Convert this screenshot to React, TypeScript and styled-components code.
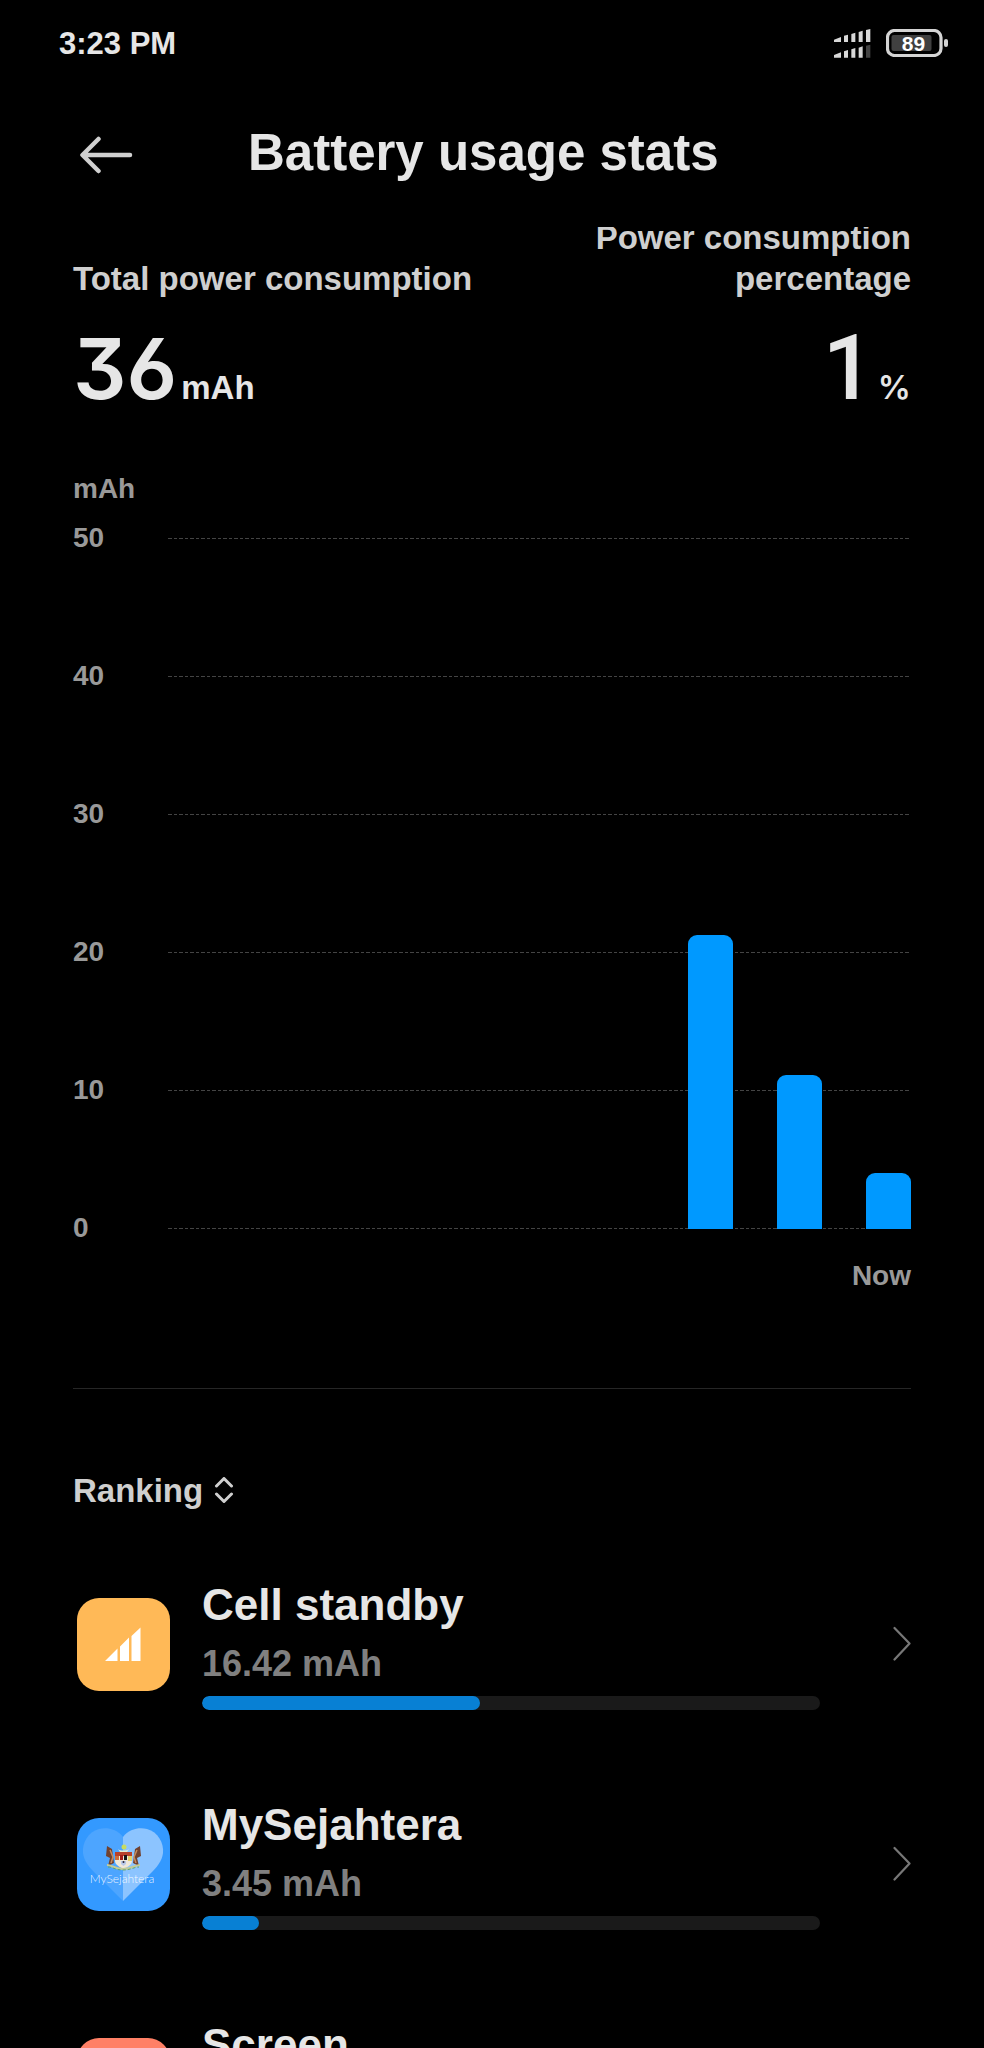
import React from "react";
import styled, { createGlobalStyle } from "styled-components";

const GlobalStyle = createGlobalStyle`
  *, *::before, *::after { box-sizing: border-box; }
  html, body { margin: 0; background: #000; }
  body { font-family: "Liberation Sans", Arial, sans-serif; font-weight: 700; color: #e6e6e6; }
  h1, h2, p, ul, dl, dd { margin: 0; padding: 0; }
  ul { list-style: none; }
  svg { display: block; flex: none; }
`;

const Screen = styled.div`
  height: 100vh;
  display: flex;
  flex-direction: column;
  overflow: hidden;
`;

const StatusBar = styled.div`
  flex: none;
  display: flex;
  align-items: center;
  justify-content: space-between;
  height: 86px;
  padding: 0 35px 0 59px;
`;

const Clock = styled.time`
  font-size: 31px;
  line-height: 36px;
  padding-top: 2px;
`;

const StatusIcons = styled.div`
  display: flex;
  align-items: center;
  gap: 15px;
`;

const TitleBar = styled.header`
  flex: none;
  display: flex;
  align-items: center;
  height: 141px;
  padding: 0 73px 4px 80px;
  gap: 114px;
`;

const BackButton = styled.button`
  padding: 0;
  border: 0;
  background: none;
  color: #d0d0d0;
  cursor: pointer;
`;

const Title = styled.h1`
  font-size: 51px;
  line-height: 60px;
  padding-bottom: 4px;
`;

const Scroller = styled.main`
  flex: 1;
  min-height: 0;
  overflow-y: auto;
  scrollbar-width: none;
`;

const Content = styled.div`
  margin-top: -10px;
  padding: 0 73px;
`;

const Summary = styled.dl`
  display: flex;
  justify-content: space-between;
  align-items: flex-end;
`;

const Stat = styled.div<{ $end?: boolean }>`
  max-width: ${(p) => (p.$end ? "330px" : "420px")};
  text-align: ${(p) => (p.$end ? "right" : "left")};
`;

const StatLabel = styled.dt`
  font-size: 33px;
  line-height: 41px;
  color: #cfcfcf;
`;

const StatValue = styled.dd<{ $end?: boolean }>`
  display: flex;
  align-items: baseline;
  justify-content: ${(p) => (p.$end ? "flex-end" : "flex-start")};
  gap: 4px;
  height: 140px;
  padding-top: 20px;
`;

const Figure = styled.span<{ $face: string; $size: number; $weight: number }>`
  font-family: ${(p) => p.$face}, sans-serif;
  font-size: ${(p) => p.$size}px;
  font-weight: ${(p) => p.$weight};
  font-feature-settings: "cv09", "cv03";
  line-height: 100px;
`;

const Unit = styled.span`
  font-size: 33px;
`;

const PercentUnit = styled(Unit)`
  font-family: Inter, sans-serif;
  font-weight: 600;
`;

const AxisText = styled.span`
  font-size: 28px;
  line-height: 28px;
  color: #999;
`;

const Chart = styled.section`
  display: flex;
  flex-direction: column;
  padding: 36px 0 98px;
`;

const Plot = styled.div`
  display: grid;
  grid-template-columns: 95px 1fr;
  margin: 21px 0 20px;
`;

const Ticks = styled.ul`
  grid-area: 1 / 1 / 2 / 3;
  display: flex;
  flex-direction: column;
  gap: 110px;
`;

const Tick = styled.li`
  display: grid;
  grid-template-columns: 95px 1fr;
  align-items: center;
  height: 28px;
`;

const GridLine = styled.span`
  height: 1px;
  background: repeating-linear-gradient(
    90deg,
    #444 0 4px,
    transparent 4px 6px,
    #444 6px 9px,
    transparent 9px 11px
  );
`;

const Bars = styled.div`
  grid-area: 1 / 2 / 2 / 3;
  align-self: end;
  display: flex;
  justify-content: flex-end;
  align-items: flex-end;
  gap: 44px;
  padding-bottom: 13px;
`;

const Bar = styled.div`
  width: 45px;
  border-radius: 9px 9px 0 0;
  background: #0099ff;
`;

const NowLabel = styled(AxisText)`
  align-self: flex-end;
`;

const Divider = styled.hr`
  height: 1px;
  margin: 0;
  border: 0;
  background: #262626;
`;

const SortButton = styled.button`
  display: flex;
  align-items: center;
  gap: 11px;
  margin: 80px 0 61px;
  padding: 0;
  border: 0;
  background: none;
  font: inherit;
  font-size: 33px;
  line-height: 44px;
  color: #cfcfcf;
  cursor: pointer;
`;

const AppLink = styled.a`
  display: flex;
  align-items: center;
  height: 140px;
  margin-bottom: 80px;
  padding-left: 4px;
  color: inherit;
  text-decoration: none;
`;

const AppDetails = styled.div`
  flex: 1;
  display: flex;
  flex-direction: column;
  gap: 4px;
  margin: 0 73px 0 32px;
`;

const AppName = styled.h2`
  font-size: 44px;
  line-height: 54px;
`;

const AppUsage = styled.p`
  font-size: 36px;
  line-height: 56px;
  color: #808080;
`;

const Track = styled.div`
  height: 14px;
  border-radius: 7px;
  background: #1a1a1a;
  overflow: hidden;
`;

const Fill = styled.div`
  height: 100%;
  border-radius: 7px;
  background: #0880d4;
`;

const SignalIcon = () => (
  <svg width="37" height="29" viewBox="0 0 111 87" fill="#d8d8d8" aria-hidden="true">
    <path d="M0 39V32L21 24V39ZM30 39V20L42 17V39ZM52 39V15L64 11V39ZM74 39V9L86 5V39ZM96 39V3L109 0V39Z" />
    <path d="M0 86V78L21 70V86ZM30 86V67L42 63V86ZM52 86V61L64 57V86ZM74 86V56L86 52V86Z" />
    <path d="M96 86V50L109 47V86Z" fill="#444" />
  </svg>
);

const BatteryIcon = () => (
  <svg width="63" height="28" viewBox="0 0 63 28" role="img" aria-label="Battery 89%">
    <rect x="1.5" y="1.5" width="53.5" height="25" rx="7" fill="none" stroke="#d4d4d4" strokeWidth="3.2" />
    <rect x="5.500" y="6" width="40" height="16" rx="2" fill="#404040" />
    <rect x="58" y="10" width="4" height="8" rx="2" fill="#d4d4d4" />
    <text x="27.500" y="21.500" textAnchor="middle" fontFamily="Liberation Sans, sans-serif" fontSize="21" fontWeight="700" fill="#fff">89</text>
  </svg>
);

const BackIcon = () => (
  <svg width="54" height="38" viewBox="0 0 54 38" fill="none" stroke="currentColor" strokeWidth="4.5" strokeLinecap="round" strokeLinejoin="round" aria-hidden="true">
    <path d="M50 19H3M18.500 3L2.500 19L18.500 35" />
  </svg>
);

const SortIcon = () => (
  <svg width="20" height="28" viewBox="0 0 20 28" fill="none" stroke="currentColor" strokeWidth="3" strokeLinecap="round" strokeLinejoin="round" aria-hidden="true">
    <path d="M2.500 9L10 1.500L17.500 9M2.500 17L10 24.500L17.500 17" />
  </svg>
);

const ChevronIcon = () => (
  <svg width="18" height="36" viewBox="0 0 18 36" fill="none" stroke="#777" strokeWidth="2.200" strokeLinecap="round" strokeLinejoin="round" aria-hidden="true">
    <path d="M1.500 2L16.500 17.500L1.500 33.500" />
  </svg>
);

const CellIcon = () => (
  <svg width="93" height="93" viewBox="0 0 93 93" aria-hidden="true">
    <rect width="93" height="93" rx="22" fill="#ffb957" />
    <path fill="#fff" d="M28 63L40.500 50.500V63ZM43 63V48.500L52 39.500V63ZM54.500 63V38L63.500 29.500V63Z" />
  </svg>
);

const HealthIcon = () => (
  <svg width="93" height="93" viewBox="0 0 93 93" aria-hidden="true">
    <rect width="93" height="93" rx="22" fill="#3399ff" />
    <path fill="#4da5ff" d="M46 19C40 11 30 9 22 11C11 14 5 25 6 35C7 43 12 49 18 55L46 83Z" />
    <path fill="#8cc4ff" d="M46 19C52 11 62 9 70 11C81 14 87 25 86 35C85 43 80 49 74 55L46 83Z" />
    <path d="M30 28L35 31L37 45L31 48L33 40L29 38Z" fill="#70412f" />
    <path d="M63 28L58 31L56 45L62 48L60 40L64 38Z" fill="#70412f" />
    <path d="M33 32L36 39L34 45M60 32L57 39L59 45" stroke="#c88a5c" strokeWidth="1.500" fill="none" />
    <path d="M41 31C43 33 50 33 52 31L50 34H43Z" fill="#e6edd0" />
    <circle cx="47" cy="29" r="2.500" fill="#c8dc60" />
    <path d="M38 34H55V43C55 47 50 49 46.500 51C43 49 38 47 38 43Z" fill="#efe8d8" />
    <path d="M38 34H55V38H38Z" fill="#b8422c" />
    <path d="M38 38H42V42H38Z" fill="#cf6e3c" />
    <path d="M43 37H46V42H43Z" fill="#a31d18" />
    <path d="M47 37H50V42H47Z" fill="#181818" />
    <path d="M51 38H55V43H51Z" fill="#e4d06c" />
    <path d="M44 43H49V46L46.500 48L44 46Z" fill="#b8c8e8" />
    <circle cx="46.500" cy="44" r="1" fill="#2c2730" />
    <path d="M30 47C35 47 37 51 46 51C55 51 58 47 63 47" stroke="#c4cc98" strokeWidth="2.200" fill="none" />
    <path d="M31 49C36 49 38 52 46 52C54 52 57 49 62 49" stroke="#5da66b" strokeWidth="1" fill="none" strokeDasharray="3 2" />
    <text x="45" y="65" textAnchor="middle" fontFamily="Lato, sans-serif" fontWeight="300" fontSize="12" fill="#fff" fillOpacity="0.9">MySejahtera</text>
  </svg>
);

const ScreenIcon = () => (
  <svg width="93" height="93" viewBox="0 0 93 93" aria-hidden="true">
    <rect width="93" height="93" rx="22" fill="#ff8066" />
    <rect x="32" y="26" width="29" height="42" rx="4" fill="#fff" />
  </svg>
);

const ticks = [50, 40, 30, 20, 10, 0];
const PIXELS_PER_UNIT = 14;
const bars = [21, 11, 4];

const apps = [
  { name: "Cell standby", usage: "16.42 mAh", share: 45, Icon: CellIcon },
  { name: "MySejahtera", usage: "3.45 mAh", share: 9.2, Icon: HealthIcon },
  { name: "Screen", usage: "3.12 mAh", share: 8.5, Icon: ScreenIcon },
];

export default function App() {
  return (
    <>
      <GlobalStyle />
      <Screen>
        <StatusBar>
          <Clock>3:23 PM</Clock>
          <StatusIcons>
            <SignalIcon />
            <BatteryIcon />
          </StatusIcons>
        </StatusBar>
        <TitleBar>
          <BackButton type="button" aria-label="Back">
            <BackIcon />
          </BackButton>
          <Title>Battery usage stats</Title>
        </TitleBar>
        <Scroller>
          <Content>
            <Summary>
              <Stat>
                <StatLabel>Total power consumption</StatLabel>
                <StatValue>
                  <Figure $face="Inter" $size={84} $weight={600}>36</Figure>
                  <Unit>mAh</Unit>
                </StatValue>
              </Stat>
              <Stat $end>
                <StatLabel>Power consumption percentage</StatLabel>
                <StatValue $end>
                  <Figure $face="Roboto" $size={90} $weight={500}>1</Figure>
                  <PercentUnit>%</PercentUnit>
                </StatValue>
              </Stat>
            </Summary>
            <Chart aria-label="Power consumption over time">
              <AxisText>mAh</AxisText>
              <Plot>
                <Ticks>
                  {ticks.map((tick) => (
                    <Tick key={tick}>
                      <AxisText>{tick}</AxisText>
                      <GridLine />
                    </Tick>
                  ))}
                </Ticks>
                <Bars>
                  {bars.map((value) => (
                    <Bar key={value} style={{ height: value * PIXELS_PER_UNIT }} />
                  ))}
                </Bars>
              </Plot>
              <NowLabel>Now</NowLabel>
            </Chart>
            <Divider />
            <SortButton type="button">
              Ranking
              <SortIcon />
            </SortButton>
            <ul>
              {apps.map(({ name, usage, share, Icon }) => (
                <li key={name}>
                  <AppLink href="#">
                    <Icon />
                    <AppDetails>
                      <AppName>{name}</AppName>
                      <AppUsage>{usage}</AppUsage>
                      <Track>
                        <Fill style={{ width: `${share}%` }} />
                      </Track>
                    </AppDetails>
                    <ChevronIcon />
                  </AppLink>
                </li>
              ))}
            </ul>
          </Content>
        </Scroller>
      </Screen>
    </>
  );
}
